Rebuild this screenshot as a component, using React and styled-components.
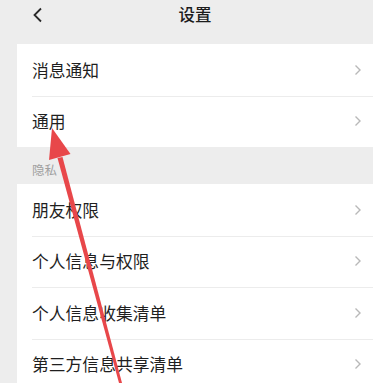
import React from "react"
import styled, { createGlobalStyle } from "styled-components"

const GlobalStyle = createGlobalStyle`
  html, body {
    margin: 0;
    padding: 0;
    background: #ededed;
    overflow: hidden;
    font-family: "Noto Sans CJK SC", "Noto Sans", sans-serif;
  }
`

const Page = styled.div`
  position: relative;
  width: 373px;
  height: 383px;
  overflow: hidden;
  background: #ededed;
  padding-left: 17px;
  box-sizing: border-box;
`

const Header = styled.div`
  height: 44px;
  position: relative;
  display: flex;
  justify-content: center;
  align-items: flex-start;
  padding-top: 3px;
  box-sizing: border-box;
`

const BackButton = styled.div`
  position: absolute;
  left: 15px;
  top: 7px;
  width: 12px;
  height: 16px;
  display: flex;
`

const Title = styled.div`
  font-size: 16.5px;
  line-height: 22px;
  font-weight: 500;
  color: #1c1c1c;
  letter-spacing: 0;
`

const Group = styled.div`
  background: #fff;
`

const Row = styled.div`
  height: 51.5px;
  display: flex;
  align-items: center;
  padding-left: 15px;
  padding-right: 11px;
  position: relative;
  box-sizing: border-box;

  & + &::before {
    content: "";
    position: absolute;
    top: 0;
    left: 15px;
    right: 0;
    height: 1px;
    background: #ececec;
  }
`

const Label = styled.div`
  flex: 1;
  font-size: 16.8px;
  line-height: 20px;
  color: #1f1f1f;
`

const SectionTitle = styled.div`
  height: 37px;
  display: flex;
  align-items: flex-end;
  padding-left: 15px;
  padding-bottom: 6px;
  box-sizing: border-box;
  font-size: 12.5px;
  line-height: 16px;
  color: #a0a0a0;
`

const Overlay = styled.svg`
  position: absolute;
  left: 0;
  top: 0;
  pointer-events: none;
`

const Chevron = () => (
  <svg width="8" height="12" viewBox="0 0 8 12">
    <path d="M1.5 1.5 L6 6 L1.5 10.5" fill="none" stroke="#b8b8b8" strokeWidth="1.4" />
  </svg>
)

const groups = [
  { title: null, items: ["消息通知", "通用"] },
  {
    title: "隐私",
    items: ["朋友权限", "个人信息与权限", "个人信息收集清单", "第三方信息共享清单"],
  },
]

const App = () => {
  return (
    <>
      <GlobalStyle />
      <Page>
        <Header>
          <BackButton>
            <svg width="12" height="16" viewBox="0 0 12 16">
              <path d="M9 1.5 L2.5 8 L9 14.5" fill="none" stroke="#2a2a2a" strokeWidth="1.8" />
            </svg>
          </BackButton>
          <Title>设置</Title>
        </Header>
        {groups.map(({ title, items }, gi) => (
          <React.Fragment key={gi}>
            {title && <SectionTitle>{title}</SectionTitle>}
            <Group>
              {items.map(item => (
                <Row key={item}>
                  <Label>{item}</Label>
                  <Chevron />
                </Row>
              ))}
            </Group>
          </React.Fragment>
        ))}
        <Overlay width="373" height="383" viewBox="0 0 373 383">
          <polygon points="57.5,158 62.5,157 122,383 119,383" fill="#e8474a" />
          <polygon points="52,128 70.5,154 49,160" fill="#e8474a" />
        </Overlay>
      </Page>
    </>
  )
}

export default App
